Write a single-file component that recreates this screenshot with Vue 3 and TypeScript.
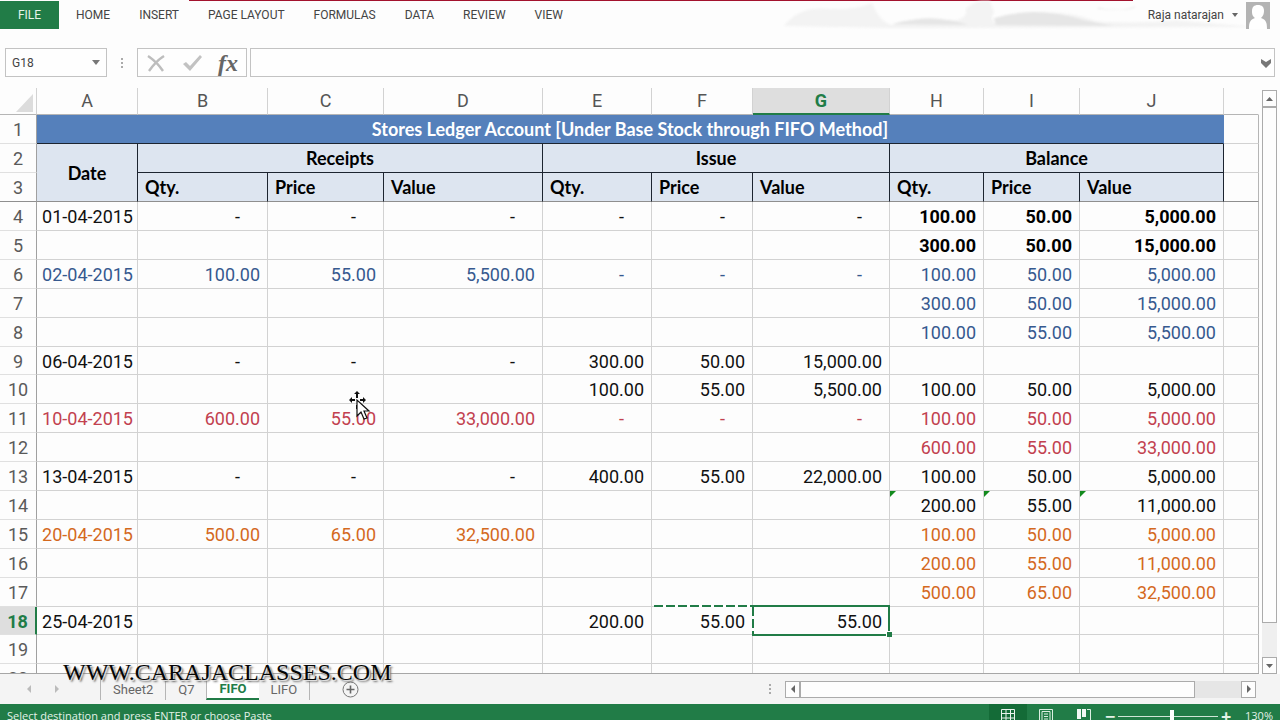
<script setup lang="ts">
import { ref } from 'vue'

type Tone = 'plain' | 'strong' | 'blue' | 'red' | 'orange'

interface LedgerRow {
  n: number
  cells: string[]
  tone: Tone
  balance?: Tone
}

const menus: string[] = ['HOME', 'INSERT', 'PAGE LAYOUT', 'FORMULAS', 'DATA', 'REVIEW', 'VIEW']
const letters: string[] = ['A', 'B', 'C', 'D', 'E', 'F', 'G', 'H', 'I', 'J']
const subheads: string[] = ['Qty.', 'Price', 'Value', 'Qty.', 'Price', 'Value', 'Qty.', 'Price', 'Value']
const sheets: string[] = ['Sheet2', 'Q7', 'FIFO', 'LIFO']

const blank: string[] = ['', '', '', '', '', '', '', '', '', '']

const rows: LedgerRow[] = [
  { n: 4, tone: 'plain', balance: 'strong', cells: ['01-04-2015', '-', '-', '-', '-', '-', '-', '100.00', '50.00', '5,000.00'] },
  { n: 5, tone: 'plain', balance: 'strong', cells: ['', '', '', '', '', '', '', '300.00', '50.00', '15,000.00'] },
  { n: 6, tone: 'blue', cells: ['02-04-2015', '100.00', '55.00', '5,500.00', '-', '-', '-', '100.00', '50.00', '5,000.00'] },
  { n: 7, tone: 'blue', cells: ['', '', '', '', '', '', '', '300.00', '50.00', '15,000.00'] },
  { n: 8, tone: 'blue', cells: ['', '', '', '', '', '', '', '100.00', '55.00', '5,500.00'] },
  { n: 9, tone: 'plain', cells: ['06-04-2015', '-', '-', '-', '300.00', '50.00', '15,000.00', '', '', ''] },
  { n: 10, tone: 'plain', cells: ['', '', '', '', '100.00', '55.00', '5,500.00', '100.00', '50.00', '5,000.00'] },
  { n: 11, tone: 'red', cells: ['10-04-2015', '600.00', '55.00', '33,000.00', '-', '-', '-', '100.00', '50.00', '5,000.00'] },
  { n: 12, tone: 'red', cells: ['', '', '', '', '', '', '', '600.00', '55.00', '33,000.00'] },
  { n: 13, tone: 'plain', cells: ['13-04-2015', '-', '-', '-', '400.00', '55.00', '22,000.00', '100.00', '50.00', '5,000.00'] },
  { n: 14, tone: 'plain', cells: ['', '', '', '', '', '', '', '200.00', '55.00', '11,000.00'] },
  { n: 15, tone: 'orange', cells: ['20-04-2015', '500.00', '65.00', '32,500.00', '', '', '', '100.00', '50.00', '5,000.00'] },
  { n: 16, tone: 'orange', cells: ['', '', '', '', '', '', '', '200.00', '55.00', '11,000.00'] },
  { n: 17, tone: 'orange', cells: ['', '', '', '', '', '', '', '500.00', '65.00', '32,500.00'] },
  { n: 18, tone: 'plain', cells: ['25-04-2015', '', '', '', '200.00', '55.00', '55.00', '', '', ''] },
  { n: 19, tone: 'plain', cells: blank },
  { n: 20, tone: 'plain', cells: blank },
]

const activeSheet = ref('FIFO')
const cellName = ref('G18')
const formula = ref('')
const zoom = ref(130)

function cellClass(row: LedgerRow, col: number): (string | Record<string, boolean>)[] {
  return [
    col >= 7 && row.balance ? row.balance : row.tone,
    {
      date: col === 0,
      dash: row.cells[col] === '-',
      flagged: row.n === 14 && col >= 7,
      copied: row.n === 18 && col === 5,
      active: row.n === 18 && col === 6,
    },
  ]
}
</script>

<template>
  <div class="app">
    <header class="ribbon">
      <svg class="clouds" viewBox="0 0 470 28" preserveAspectRatio="none" aria-hidden="true">
        <path d="M0 26 Q14 6 42 8 T88 2 Q96 22 108 25 Q140 14 160 20 Q184 22 182 8 Q192 -2 206 0 L210 12 Q204 20 216 25 Q232 10 262 12 Q292 12 312 21 Q350 24 392 20 L470 27 L108 28 Z" fill="#f3f3f3" />
        <path d="M108 24 Q150 12 184 25 Z M210 18 Q250 4 300 20 L330 26 L212 25 Z" fill="#e6e6e6" />
        <path d="M314 7 Q340 12 352 5 Q348 12 314 8 Z" fill="#e8e8e8" />
      </svg>
      <nav class="menus">
        <button class="file" type="button">FILE</button>
        <button v-for="m in menus" :key="m" class="menu" type="button">{{ m }}</button>
      </nav>
      <button class="user" type="button">
        <span>Raja natarajan</span>
        <svg width="6" height="4" viewBox="0 0 6 4" aria-hidden="true"><path d="M0 0h6L3 4z" fill="#666" /></svg>
        <svg class="avatar" width="24" height="27" viewBox="0 0 24 27" aria-hidden="true">
          <path d="M0 0h24v27H0z" fill="#b3b3b3" />
          <path d="M3 27c0-7 1-9 6-11-3-2-3-5-3-7 0-4 2-6 6-6s6 2 6 6c0 3-1 5-3 7 5 2 6 4 6 11z" fill="#fff" />
        </svg>
      </button>
    </header>

    <div class="formula-bar">
      <div class="name-box">
        <input v-model="cellName" aria-label="Name box" />
        <button type="button" aria-label="Show names">
          <svg width="8" height="5" viewBox="0 0 8 5"><path d="M0 0h8L4 5z" fill="#777" /></svg>
        </button>
      </div>
      <span class="grip"><i></i><i></i><i></i></span>
      <div class="fx-box">
        <button type="button" aria-label="Cancel">
          <svg width="20" height="20" viewBox="0 0 20 20"><path d="M2 3Q11 9 17 18M18 3Q10 8 3 18" fill="none" stroke="#bdbdbd" stroke-width="2.4" /></svg>
        </button>
        <button type="button" aria-label="Enter">
          <svg width="20" height="20" viewBox="0 0 20 20"><path d="M1 11l3-2 4 4L18 2l2 2L8 18z" fill="#c2c2c2" /></svg>
        </button>
        <button class="fx" type="button" aria-label="Insert function"><em>fx</em></button>
      </div>
      <div class="formula">
        <input v-model="formula" aria-label="Formula" />
        <button type="button" aria-label="Expand formula bar">
          <svg width="12" height="10" viewBox="0 0 12 10"><path d="M1 1l5 3 5-3v4L6 10 1 5z" fill="#777" /></svg>
        </button>
      </div>
    </div>

    <main class="workspace">
      <div class="sheet">
        <table>
          <colgroup>
            <col class="w-head" /><col class="w-a" /><col class="w-b" /><col class="w-c" /><col class="w-d" /><col class="w-e" />
            <col class="w-f" /><col class="w-g" /><col class="w-h" /><col class="w-i" /><col class="w-j" /><col />
          </colgroup>
          <thead>
            <tr>
              <th class="corner"><svg width="17" height="18" viewBox="0 0 17 18"><path d="M17 0v18H0z" fill="#dcdcdc" /></svg></th>
              <th v-for="l in letters" :key="l" class="letter" :class="{ on: l === 'G' }" scope="col">{{ l }}</th>
              <th class="letter tail"></th>
            </tr>
          </thead>
          <tbody>
            <tr>
              <th class="num" scope="row">1</th>
              <td class="title" colspan="10">Stores Ledger Account [Under Base Stock through FIFO Method]</td>
              <td></td>
            </tr>
            <tr>
              <th class="num" scope="row">2</th>
              <td class="group frozen" rowspan="2">Date</td>
              <td class="group" colspan="3">Receipts</td>
              <td class="group" colspan="3">Issue</td>
              <td class="group" colspan="3">Balance</td>
              <td></td>
            </tr>
            <tr>
              <th class="num frozen" scope="row">3</th>
              <td v-for="(s, i) in subheads" :key="i" class="group sub frozen">{{ s }}</td>
              <td class="frozen"></td>
            </tr>
            <tr v-for="r in rows" :key="r.n">
              <th class="num" :class="{ on: r.n === 18 }" scope="row">{{ r.n }}</th>
              <td v-for="(c, i) in r.cells" :key="i" :class="cellClass(r, i)">{{ c }}</td>
              <td></td>
            </tr>
          </tbody>
        </table>
        <svg class="pointer" width="24" height="30" viewBox="0 0 24 30" aria-hidden="true">
          <path d="M8 0l3 3H9v4H7V3H5zM0 9l3-3v2h3v2H3v2zM17 9l-3-3v2h-3v2h3v2zM7 14h2v4H7z" fill="#111" />
          <path d="M8 9v16l4-4 3 7 3-1-3-7h5z" fill="#fff" stroke="#111" stroke-width="1.2" />
        </svg>
      </div>
      <div class="vscroll">
        <button type="button" aria-label="Scroll up"><svg width="7" height="4" viewBox="0 0 7 4"><path d="M0 4h7L3.500 0z" fill="#666" /></svg></button>
        <div class="thumb"></div>
        <button type="button" aria-label="Scroll down"><svg width="7" height="4" viewBox="0 0 7 4"><path d="M0 0h7L3.500 4z" fill="#666" /></svg></button>
      </div>
    </main>

    <footer class="tabs">
      <div class="tab-nav">
        <button type="button" aria-label="Previous sheet"><svg width="4" height="8" viewBox="0 0 4 8"><path d="M4 0v8L0 4z" fill="#bbb" /></svg></button>
        <button type="button" aria-label="Next sheet"><svg width="4" height="8" viewBox="0 0 4 8"><path d="M0 0v8l4-4z" fill="#bbb" /></svg></button>
      </div>
      <button v-for="s in sheets" :key="s" type="button" class="tab" :class="{ current: s === activeSheet }" @click="activeSheet = s">{{ s }}</button>
      <button class="add" type="button" aria-label="New sheet">
        <svg width="17" height="17" viewBox="0 0 17 17"><circle cx="8.500" cy="8.500" r="7.500" fill="none" stroke="#777" /><path d="M8.500 4.500v8M4.500 8.500h8" stroke="#666" stroke-width="1.600" /></svg>
      </button>
      <span class="grip"><i></i><i></i><i></i></span>
      <div class="hscroll">
        <button type="button" aria-label="Scroll left"><svg width="4" height="8" viewBox="0 0 4 8"><path d="M4 0v8L0 4z" fill="#666" /></svg></button>
        <div class="thumb"></div>
        <button type="button" aria-label="Scroll right"><svg width="4" height="8" viewBox="0 0 4 8"><path d="M0 0v8l4-4z" fill="#666" /></svg></button>
      </div>
      <div class="watermark">WWW.CARAJACLASSES.COM</div>
    </footer>

    <div class="status">
      <span class="message">Select destination and press ENTER or choose Paste</span>
      <button class="view chosen" type="button" aria-label="Normal view">
        <svg width="14" height="14" viewBox="0 0 14 14"><path d="M.5.5h13v13H.5zM.5 4.500h13M.5 9h13M5 .5v13M9.500.5v13" fill="none" stroke="#e8f3ec" /></svg>
      </button>
      <button class="view" type="button" aria-label="Page layout view">
        <svg width="14" height="14" viewBox="0 0 14 14"><path d="M.5.5h13v13H.5zM3 2.500h8v11H3zM5 5h4M5 7.500h4M5 10h4" fill="none" stroke="#dcefe2" /></svg>
      </button>
      <button class="view" type="button" aria-label="Page break view">
        <svg width="14" height="14" viewBox="0 0 14 14"><path d="M0 0h4v10H0zM5 0h4v8H5z" fill="#f2f8f4" /><path d="M10 .5h3.500v13H.5V11" fill="none" stroke="#dcefe2" /></svg>
      </button>
      <span class="sign">−</span>
      <input v-model.number="zoom" type="range" min="10" max="230" aria-label="Zoom" />
      <span class="sign">+</span>
      <span class="percent">{{ zoom }}%</span>
    </div>
  </div>
</template>

<style>
body {
  margin: 0;
  overflow: hidden;
}
</style>

<style scoped>
.app {
  position: relative;
  display: flex;
  flex-direction: column;
  height: 100vh;
  overflow: hidden;
  background: #fdfdfd;
  color: #444;
  font-family: Roboto, "Noto Sans", sans-serif;
  font-size: 12px;
}

button,
input {
  margin: 0;
  padding: 0;
  border: 0;
  background: none;
  color: inherit;
  font: inherit;
}

button {
  display: flex;
  align-items: center;
  justify-content: center;
}

svg {
  display: block;
}

.ribbon {
  position: relative;
  display: flex;
  justify-content: space-between;
  flex: 0 0 29px;
}

.ribbon::before {
  content: "";
  position: absolute;
  top: 0;
  left: 189px;
  right: 147px;
  height: 1px;
  background: #a3122d;
}

.clouds {
  position: absolute;
  top: 1px;
  right: 26px;
  width: 470px;
  height: 27px;
  filter: blur(1px);
}

.menus {
  position: relative;
  display: flex;
  gap: 29px;
  height: 29px;
  padding-top: 1px;
  box-sizing: border-box;
}

.file {
  width: 59px;
  margin-right: -12px;
  background: #217c47;
  color: #e6f3ea;
}

.user {
  position: relative;
  gap: 8px;
  margin-right: 10px;
}

.avatar {
  align-self: flex-end;
}

.formula-bar {
  display: flex;
  height: 29px;
  padding: 19px 5px 11px;
}

.name-box,
.fx-box,
.formula {
  display: flex;
  box-sizing: border-box;
  border: 1px solid #c3c3c3;
  background: #fefefe;
}

.name-box {
  width: 102px;
}

.name-box input {
  flex: 1;
  min-width: 0;
  padding-left: 6px;
}

.name-box button {
  width: 20px;
}

.grip {
  display: flex;
  flex-direction: column;
  align-items: center;
  justify-content: center;
  gap: 2px;
  width: 30px;
}

.grip i {
  width: 2px;
  height: 2px;
  background: #aaa;
}

.fx-box {
  width: 110px;
  justify-content: space-around;
}

.fx {
  color: #666;
  font-family: "Liberation Serif", serif;
  font-size: 24px;
  font-weight: bold;
  line-height: 24px;
}

.formula {
  flex: 1;
  margin-left: 3px;
}

.formula input {
  flex: 1;
  min-width: 0;
}

.formula button {
  width: 16px;
}

.workspace {
  display: flex;
  flex: 1;
  min-height: 0;
  gap: 3px;
}

.sheet {
  position: relative;
  flex: 1;
  overflow: hidden;
  border-bottom: 1px solid #a6a6a6;
}

table {
  width: 100%;
  border-collapse: separate;
  border-spacing: 0;
  table-layout: fixed;
  font-size: 18px;
  line-height: 20px;
}

.w-head { width: 37px; }
.w-a { width: 101px; }
.w-b { width: 130px; }
.w-c { width: 116px; }
.w-d { width: 159px; }
.w-e { width: 109px; }
.w-f { width: 101px; }
.w-g { width: 137px; }
.w-h { width: 94px; }
.w-i { width: 96px; }
.w-j { width: 144px; }

tr {
  height: 29px;
}

tbody tr:nth-child(9n) {
  height: 28px;
}

th,
td {
  box-sizing: border-box;
  padding: 2px 0 0;
  border-right: 1px solid #d2d2d2;
  border-bottom: 1px solid #d2d2d2;
  font-weight: normal;
  white-space: nowrap;
}

td {
  position: relative;
  padding-right: 7px;
  text-align: right;
}

td:last-child {
  border-right-color: #b5b5b5;
}

thead tr {
  height: 27px;
}

thead th {
  padding: 0;
}

.corner svg {
  margin: 3px 3px 0 auto;
}

.corner,
.letter {
  border-bottom-color: #b5b5b5;
}

.letter {
  color: #555;
}

.letter.on {
  border-bottom: 2px solid #217c47;
  background: #dedede;
  color: #217c47;
  font-weight: bold;
}

.letter.tail {
  border-right-color: transparent;
}

.num {
  border-right-color: #a0a0a0;
  border-bottom-color: #e0e0e0;
  color: #5a5a5a;
}

.num.on {
  border-right: 2px solid #217c47;
  background: #dedede;
  color: #217c47;
  font-weight: bold;
}

td.title,
td.group {
  padding-top: 0;
  padding-right: 0;
  font-family: Lato, Roboto, sans-serif;
  font-weight: bold;
  text-align: center;
}

.title {
  border-color: #5580bb #5580bb #1c2430;
  background: #5580bb;
  color: #fff;
}

.group {
  border-color: #1c2430;
  background: #dde5f0;
  color: #000;
}

td.sub {
  padding-left: 7px;
  text-align: left;
}

.frozen {
  border-bottom-color: #8f8f8f;
}

.plain { color: #111; }
.strong { color: #000; font-weight: bold; }
.blue { color: #36598f; }
.red { color: #c2414f; }
.orange { color: #d4691e; }

.date {
  padding-right: 4px;
}

.dash {
  padding-right: 27px;
}

.flagged::before {
  content: "";
  position: absolute;
  top: 0;
  left: 0;
  border: 3px solid transparent;
  border-top-color: #128a1d;
  border-left-color: #128a1d;
}

.copied::before {
  content: "";
  position: absolute;
  top: -2px;
  left: 2px;
  right: 0;
  height: 2px;
  background: repeating-linear-gradient(90deg, #217c47 0 9px, #fff 9px 12px);
}

.active {
  z-index: 1;
}

.active::before {
  content: "";
  position: absolute;
  inset: -2px -1px -2px -1px;
  border: 2px solid #217c47;
  border-left: 0;
  background: repeating-linear-gradient(#217c47 0 9px, #fff 9px 12px) left / 2px 100% no-repeat;
}

.active::after {
  content: "";
  position: absolute;
  right: -3px;
  bottom: -3px;
  width: 5px;
  height: 5px;
  border: 1px solid #fff;
  border-width: 1px 0 0 1px;
  background: #217c47;
}

.pointer {
  position: absolute;
  left: 349px;
  top: 303px;
}

.vscroll {
  display: flex;
  flex-direction: column;
  width: 15px;
  margin: 2px 3px 0 0;
  background: #efefef;
}

.vscroll button,
.hscroll button,
.thumb {
  box-sizing: border-box;
  border: 1px solid #ababab;
  background: #fdfdfd;
}

.vscroll button {
  height: 17px;
}

.vscroll .thumb {
  flex: 1;
  margin-bottom: 34px;
}

.tabs {
  position: relative;
  display: flex;
  align-items: center;
  flex: 0 0 30px;
  background: #f4f4f4;
}

.tab-nav {
  display: flex;
  gap: 24px;
  box-sizing: border-box;
  width: 100px;
  padding-left: 27px;
}

.tab {
  box-sizing: border-box;
  height: 26px;
  margin-bottom: 4px;
  padding: 4px 12px 0;
  border-left: 1px solid #b5b5b5;
  color: #666;
  font-size: 13px;
}

.tab:nth-of-type(4) {
  border-right: 1px solid #b5b5b5;
  border-left: 0;
}

.tab.current {
  border-bottom: 2px solid #217c47;
  background: #fff;
  color: #217c47;
  font-weight: bold;
}

.add {
  margin: 0 auto 0 32px;
}

.hscroll {
  display: flex;
  width: 471px;
  height: 17px;
  margin-right: 24px;
  background: #e6e6e6;
}

.hscroll button {
  width: 15px;
}

.hscroll .thumb {
  flex: 1;
  margin-right: 46px;
}

.watermark {
  position: absolute;
  left: 63px;
  bottom: 17px;
  color: #050505;
  font-family: "Liberation Serif", serif;
  font-size: 24px;
  line-height: 30px;
  text-shadow: 1px 1px 0 #ddd, 2px 2px 2px #666;
}

.status {
  display: flex;
  align-items: flex-start;
  flex: 0 0 16px;
  overflow: hidden;
  background: #217c47;
  color: #e3f1e7;
  font-family: "Open Sans", "Noto Sans", sans-serif;
  font-size: 11px;
  line-height: 24px;
}

.message {
  margin: 0 auto 0 7px;
}

.view {
  width: 38px;
  height: 24px;
}

.view.chosen {
  background: #146b37;
}

.sign {
  width: 14px;
  font-size: 18px;
  font-weight: bold;
  text-align: center;
}

.status input {
  width: 100px;
  height: 24px;
  margin: 0 1px;
  appearance: none;
}

.status input::-webkit-slider-runnable-track {
  height: 1px;
  background: #cfe5d6;
}

.status input::-webkit-slider-thumb {
  width: 4px;
  height: 12px;
  margin-top: -6px;
  appearance: none;
  background: #fff;
}

.percent {
  margin: 0 7px 0 12px;
}
</style>
